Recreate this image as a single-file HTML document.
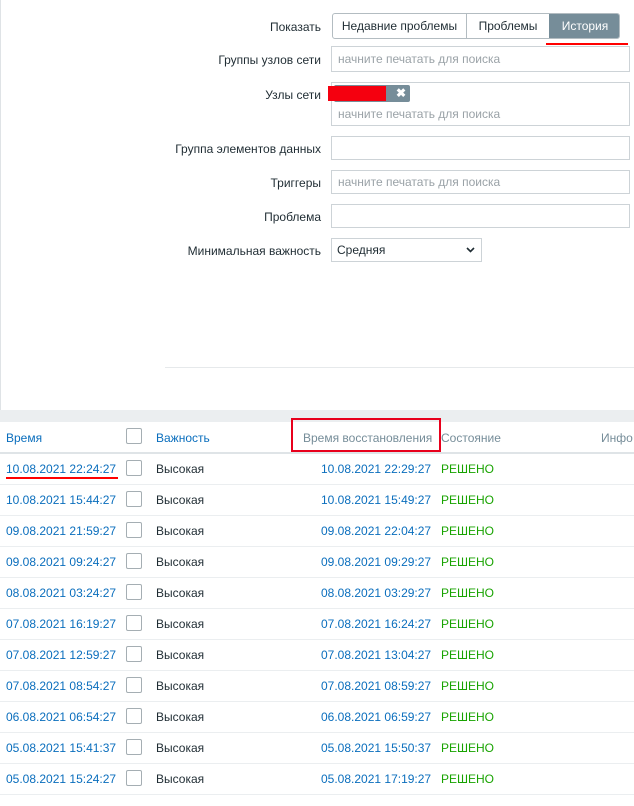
<!DOCTYPE html><html><head><meta charset="utf-8"><style>
body{margin:0;width:634px;height:806px;background:#fff;font-family:"Liberation Sans",sans-serif;font-size:12px;color:#1f2c33;position:relative;overflow:hidden}
.a{position:absolute}
.lbl{position:absolute;right:313px;text-align:right;white-space:nowrap}
.inp{position:absolute;left:331px;width:299px;border:1px solid #cdd3d7;background:#fff;color:#9aa2a7;box-sizing:border-box;padding-left:6px}
.row{position:absolute;left:0;width:634px;height:30px;border-bottom:1px solid #ebeef0}
.row span{position:absolute;top:8px}
.b{color:#0a6ebd}.g{color:#18a300}
.cb{position:absolute;left:126px;width:14px;height:14px;border:1px solid #a5aeb3;border-radius:2px;background:#fff}
</style></head><body>
<div class="a" style="left:0;top:0;width:1px;height:410px;background:#dfe3e6"></div>
<div class="a" style="left:165px;top:367px;width:469px;height:1px;background:#e6e9eb"></div>
<div class="a" style="left:0;top:410px;width:634px;height:12px;background:#ebeef0"></div>

<div class="lbl" style="top:20px">Показать</div>
<div class="a" style="left:332px;top:13px;width:288px;height:26px;border:1px solid #b3bcc1;border-radius:3px;box-sizing:border-box;overflow:hidden">
<div class="a" style="left:0;top:0;width:133px;height:24px;border-right:1px solid #b3bcc1;text-align:center;line-height:24px">Недавние проблемы</div>
<div class="a" style="left:134px;top:0;width:82px;height:24px;text-align:center;line-height:24px">Проблемы</div>
<div class="a" style="left:216px;top:0;width:72px;height:24px;background:#768d99;color:#fff;text-align:center;line-height:24px">История</div></div>
<div class="a" style="left:546px;top:43px;width:82px;height:2px;background:#f00"></div>

<div class="lbl" style="top:53px">Группы узлов сети</div>
<div class="inp" style="top:46px;height:26px;line-height:24px">начните печатать для поиска</div>
<div class="lbl" style="top:88px">Узлы сети</div>
<div class="inp" style="top:82px;height:44px"><div style="line-height:20px;margin-top:21px">начните печатать для поиска</div></div>
<div class="a" style="left:334px;top:85px;width:76px;height:17px;background:#768d99;border-radius:2px;color:#fff;font-weight:bold;font-size:12px"><span style="position:absolute;right:4px;top:1px">✖</span></div>
<div class="a" style="left:328px;top:86px;width:58px;height:15px;background:#f5000f"></div>
<div class="lbl" style="top:142px">Группа элементов данных</div>
<div class="inp" style="top:136px;height:24px"></div>
<div class="lbl" style="top:176px">Триггеры</div>
<div class="inp" style="top:170px;height:24px;line-height:22px">начните печатать для поиска</div>
<div class="lbl" style="top:210px">Проблема</div>
<div class="inp" style="top:204px;height:24px"></div>
<div class="lbl" style="top:244px">Минимальная важность</div>
<div class="a" style="left:331px;top:238px;width:151px;height:24px;border:1px solid #cdd3d7;box-sizing:border-box;line-height:22px;padding-left:5px">Средняя<svg style="position:absolute;right:6px;top:8px" width="9" height="6"><path d="M1 1 L4.5 4.5 L8 1" fill="none" stroke="#1f2c33" stroke-width="1.6"/></svg></div>

<div class="a" style="left:0;top:422px;width:634px;height:30px;border-bottom:2px solid #dfe4e7">
<span class="a b" style="left:6px;top:9px">Время</span>
<div class="cb" style="top:6px"></div>
<span class="a b" style="left:156px;top:9px">Важность</span>
<span class="a" style="left:303px;top:9px;color:#768d99">Время восстановления</span>
<span class="a" style="left:441px;top:9px;color:#768d99">Состояние</span>
<span class="a" style="left:601px;top:9px;color:#768d99">Инфо</span></div>
<div class="a" style="left:291px;top:418px;width:150px;height:34px;border:2px solid #e8001c;box-sizing:border-box"></div>

<div id="t"></div>
<div class="a" style="left:6px;top:477px;width:112px;height:2px;background:#f00"></div>
<script>
var d=[["10.08.2021 22:24:27","10.08.2021 22:29:27"],["10.08.2021 15:44:27","10.08.2021 15:49:27"],["09.08.2021 21:59:27","09.08.2021 22:04:27"],["09.08.2021 09:24:27","09.08.2021 09:29:27"],["08.08.2021 03:24:27","08.08.2021 03:29:27"],["07.08.2021 16:19:27","07.08.2021 16:24:27"],["07.08.2021 12:59:27","07.08.2021 13:04:27"],["07.08.2021 08:54:27","07.08.2021 08:59:27"],["06.08.2021 06:54:27","06.08.2021 06:59:27"],["05.08.2021 15:41:37","05.08.2021 15:50:37"],["05.08.2021 15:24:27","05.08.2021 17:19:27"]];
var h="";d.forEach(function(r,i){h+='<div class="row" style="top:'+(454+i*31)+'px"><span class="b" style="left:6px">'+r[0]+'</span><div class="cb" style="top:6px"></div><span style="left:156px">Высокая</span><span class="b" style="left:321px">'+r[1]+'</span><span class="g" style="left:441px">РЕШЕНО</span></div>'});
document.getElementById("t").innerHTML=h;
</script>
</body></html>
